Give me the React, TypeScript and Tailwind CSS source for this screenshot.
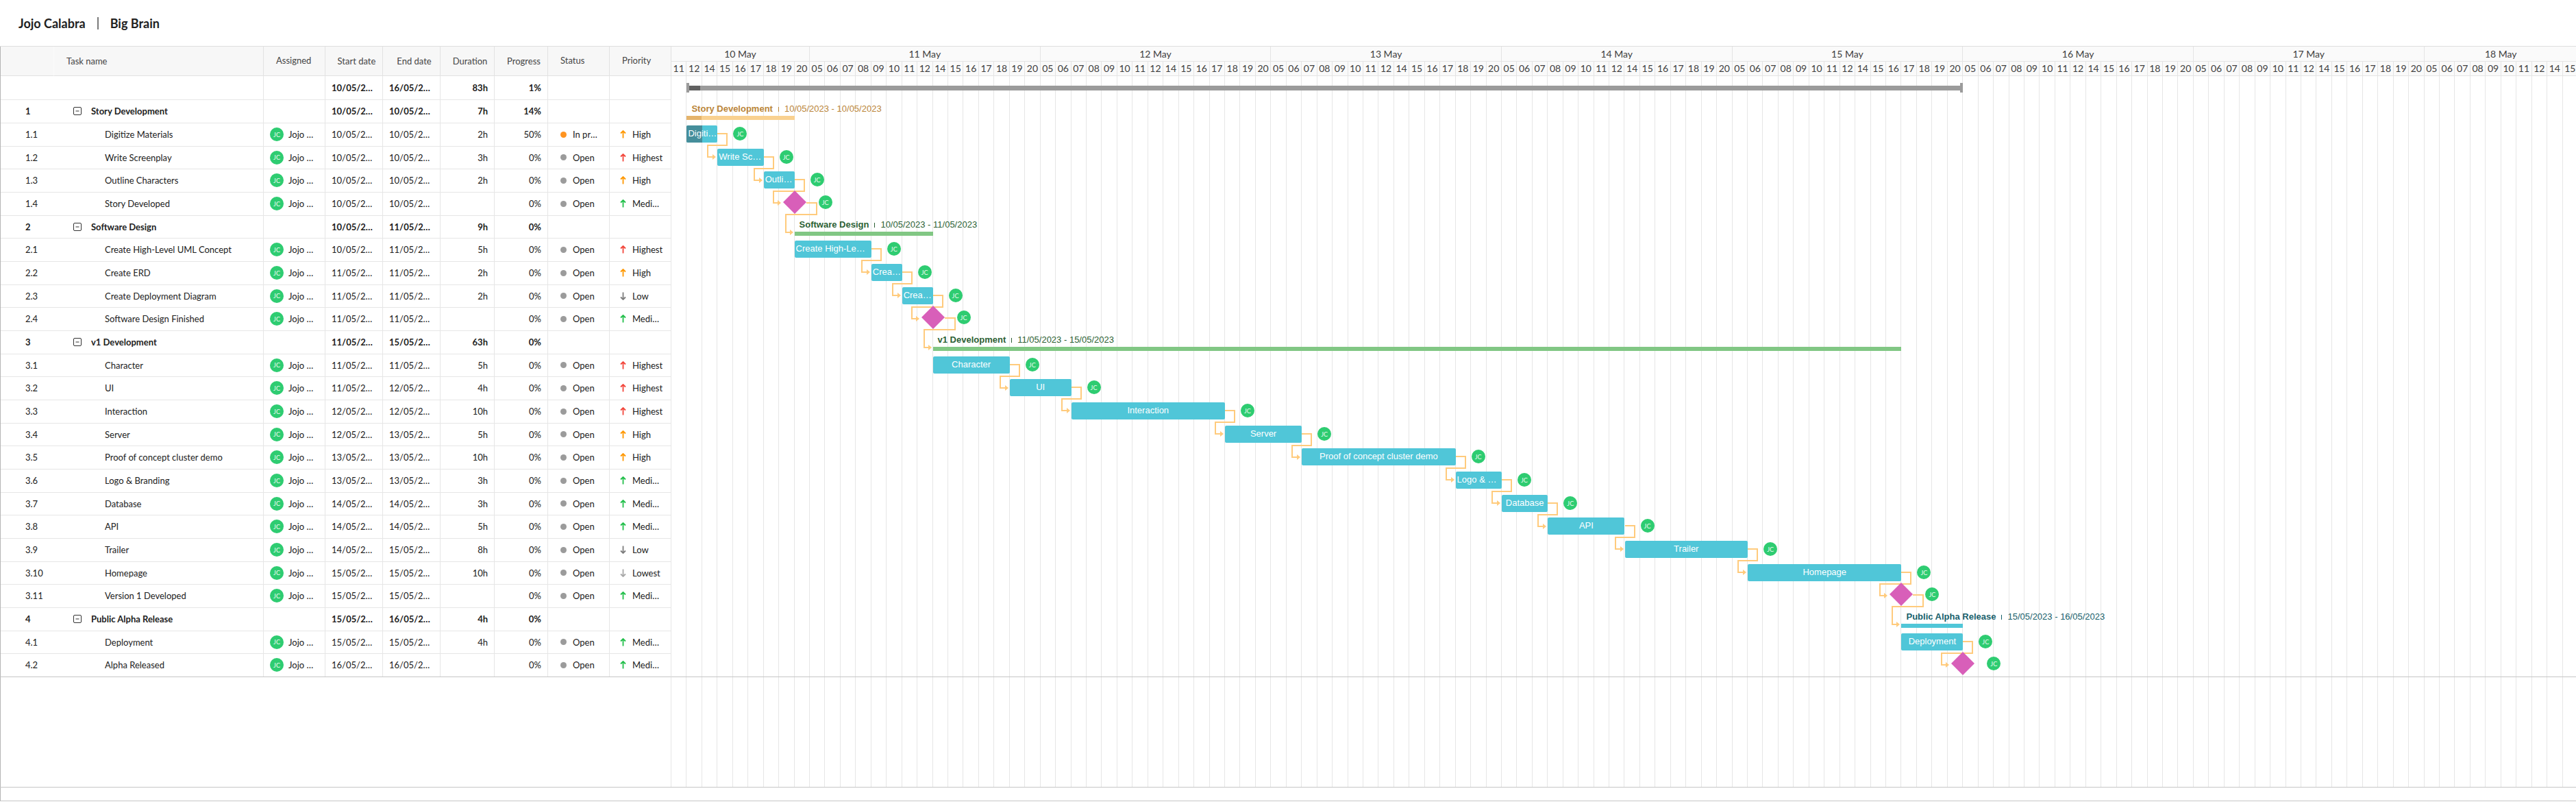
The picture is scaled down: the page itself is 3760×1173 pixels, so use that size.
import React from "react";

type Priority = "Highest" | "High" | "Medium" | "Low" | "Lowest";
type Kind = "project" | "group" | "task" | "milestone";
type Tone = "amber" | "green" | "teal";

interface Row {
  id: string;
  name: string;
  kind: Kind;
  start: string;
  end: string;
  hours: number;
  progress: number;
  from: number;
  status?: "In progress" | "Open";
  priority?: Priority;
  tone?: Tone;
}

const SLOTS = 124;

const task = (id: string, name: string, start: string, end: string, from: number, hours: number, priority: Priority, progress = 0): Row => ({
  id,
  name,
  kind: hours ? "task" : "milestone",
  start: `${start}/05/2023`,
  end: `${end}/05/2023`,
  hours,
  progress,
  from,
  status: progress ? "In progress" : "Open",
  priority,
});

const group = (id: string, name: string, start: string, end: string, from: number, hours: number, tone: Tone, progress = 0): Row => ({
  id,
  name,
  kind: "group",
  start: `${start}/05/2023`,
  end: `${end}/05/2023`,
  hours,
  progress,
  from,
  tone,
});

const rows: Row[] = [
  { id: "", name: "", kind: "project", start: "10/05/2023", end: "16/05/2023", hours: 83, progress: 1, from: 1 },
  group("1", "Story Development", "10", "10", 1, 7, "amber", 14),
  task("1.1", "Digitize Materials", "10", "10", 1, 2, "High", 50),
  task("1.2", "Write Screenplay", "10", "10", 3, 3, "Highest"),
  task("1.3", "Outline Characters", "10", "10", 6, 2, "High"),
  task("1.4", "Story Developed", "10", "10", 8, 0, "Medium"),
  group("2", "Software Design", "10", "11", 8, 9, "green"),
  task("2.1", "Create High-Level UML Concept", "10", "11", 8, 5, "Highest"),
  task("2.2", "Create ERD", "11", "11", 13, 2, "High"),
  task("2.3", "Create Deployment Diagram", "11", "11", 15, 2, "Low"),
  task("2.4", "Software Design Finished", "11", "11", 17, 0, "Medium"),
  group("3", "v1 Development", "11", "15", 17, 63, "green"),
  task("3.1", "Character", "11", "11", 17, 5, "Highest"),
  task("3.2", "UI", "11", "12", 22, 4, "Highest"),
  task("3.3", "Interaction", "12", "12", 26, 10, "Highest"),
  task("3.4", "Server", "12", "13", 36, 5, "High"),
  task("3.5", "Proof of concept cluster demo", "13", "13", 41, 10, "High"),
  task("3.6", "Logo & Branding", "13", "13", 51, 3, "Medium"),
  task("3.7", "Database", "14", "14", 54, 3, "Medium"),
  task("3.8", "API", "14", "14", 57, 5, "Medium"),
  task("3.9", "Trailer", "14", "15", 62, 8, "Low"),
  task("3.10", "Homepage", "15", "15", 70, 10, "Lowest"),
  task("3.11", "Version 1 Developed", "15", "15", 80, 0, "Medium"),
  group("4", "Public Alpha Release", "15", "16", 80, 4, "teal"),
  task("4.1", "Deployment", "15", "15", 80, 4, "Medium"),
  task("4.2", "Alpha Released", "16", "16", 84, 0, "Medium"),
];

/* Short captions for bars that are too narrow for the task's name. */
const captions: Record<string, string> = {
  "1.1": "Digiti…",
  "1.2": "Write Sc…",
  "1.3": "Outli…",
  "2.1": "Create High-Le…",
  "2.2": "Crea…",
  "2.3": "Crea…",
  "3.6": "Logo & …",
};

const fullDay = ["05", "06", "07", "08", "09", "10", "11", "12", "14", "15", "16", "17", "18", "19", "20"];
const days = [
  { label: "10 May", hours: fullDay.slice(6) },
  ...["11", "12", "13", "14", "15", "16", "17"].map((d) => ({ label: `${d} May`, hours: fullDay })),
  { label: "18 May", hours: fullDay.slice(0, 10) },
];

const rowHeight = (i: number) => (i === 0 ? "h-[35px]" : i % 3 === 0 ? "h-[33px]" : "h-[34px]");
const pct = (slots: number) => `${(slots / SLOTS) * 100}%`;

const priorityTone: Record<Priority, string> = {
  Highest: "text-[#f2473c]",
  High: "text-[#ff9800]",
  Medium: "text-[#23bf4b]",
  Low: "text-[#7d7d7d]",
  Lowest: "text-[#a8a8a8]",
};

function PriorityArrow({ level }: { level: Priority }) {
  const down = level === "Low" || level === "Lowest";
  return (
    <svg viewBox="0 0 9 12" className={`h-3 w-[9px] shrink-0 ${priorityTone[level]}`} fill="none" stroke="currentColor" strokeWidth="1.8">
      {down ? <path d="M4.5 0.5V11M1 7.5L4.5 11L8 7.5" /> : <path d="M4.5 11.5V1M1 4.5L4.5 1L8 4.5" />}
    </svg>
  );
}

function Avatar() {
  return (
    <span className="flex size-5 shrink-0 items-center justify-center rounded-full bg-[#2ecc71] text-[9px] leading-none font-normal text-white/90">
      JC
    </span>
  );
}

function CollapseButton({ name }: { name: string }) {
  return (
    <button type="button" aria-label={`Collapse ${name}`} className="size-3 shrink-0 text-[#333]">
      <svg viewBox="0 0 12 12" className="size-3" fill="none" stroke="currentColor">
        <rect x="0.5" y="0.5" width="11" height="11" rx="1.5" />
        <path d="M3.5 6H8.5" />
      </svg>
    </button>
  );
}

const cell = "border-r border-b border-[#e6e6e6] p-0 px-[9px] pb-px";
const headCell = "border-r border-b border-[#e2e2e2] p-0 font-normal text-[#454545]";

function TaskTable() {
  return (
    <table className="w-[980px] shrink-0 table-fixed border-separate border-spacing-0 border-l border-[#b5b5b5] text-[13px] leading-4 text-[#212121]">
      <colgroup>
        <col className="w-[78px]" />
        <col className="w-[306px]" />
        <col className="w-[90px]" />
        <col className="w-[84px]" />
        <col className="w-[84px]" />
        <col className="w-[79px]" />
        <col className="w-[78px]" />
        <col className="w-[90px]" />
        <col className="w-[90px]" />
      </colgroup>
      <thead>
        <tr className="h-[43px] bg-[#f7f7f7]">
          <th scope="col" aria-label="Number" className="border-r border-b border-r-[#fafafa] border-b-[#e2e2e2] p-0" />
          <th scope="col" className={`${headCell} pl-[18px] text-left`}>Task name</th>
          <th scope="col" className={`${headCell} pb-0.5 pl-[18px] text-left`}>Assigned</th>
          <th scope="col" className={`${headCell} pl-2 text-center`}>Start date</th>
          <th scope="col" className={`${headCell} pl-2 text-center`}>End date</th>
          <th scope="col" className={`${headCell} pl-2 text-center`}>Duration</th>
          <th scope="col" className={`${headCell} pl-2 text-center`}>Progress</th>
          <th scope="col" className={`${headCell} pb-0.5 pl-[18px] text-left`}>Status</th>
          <th scope="col" className={`${headCell} pb-0.5 pl-[18px] text-left`}>Priority</th>
        </tr>
      </thead>
      <tbody>
        {rows.map((r, i) => {
          const strong = r.kind === "project" || r.kind === "group";
          return (
            <tr key={i} className={`${rowHeight(i)} ${strong ? "font-bold" : ""}`}>
              <td className="border-b border-[#e6e6e6] p-0 pb-px pl-9">{r.id}</td>
              <td className={cell}>
                <div className={`flex items-center ${strong ? "gap-[14px] pl-[19px]" : "pl-[65px]"}`}>
                  {r.kind === "group" && <CollapseButton name={r.name} />}
                  <span>{r.name}</span>
                </div>
              </td>
              <td className={cell}>
                {r.status && (
                  <div className="flex items-center gap-[7px]">
                    <Avatar />
                    <span className="truncate">Jojo Calabra</span>
                  </div>
                )}
              </td>
              <td className={`${cell} truncate`}>{r.start}</td>
              <td className={`${cell} truncate`}>{r.end}</td>
              <td className={`${cell} text-right`}>{r.hours ? `${r.hours}h` : ""}</td>
              <td className={`${cell} text-right`}>{r.progress}%</td>
              <td className={cell}>
                {r.status && (
                  <div className="flex items-center gap-[9px] pr-1 pl-[9px]">
                    <span className={`size-[9px] shrink-0 rounded-full ${r.status === "Open" ? "bg-[#9b9b9b]" : "bg-[#ff9421]"}`} />
                    <span className="truncate">{r.status}</span>
                  </div>
                )}
              </td>
              <td className={cell}>
                {r.priority && (
                  <div className="flex items-center gap-[9px] pr-0.5 pl-1.5">
                    <PriorityArrow level={r.priority} />
                    <span className="truncate">{r.priority}</span>
                  </div>
                )}
              </td>
            </tr>
          );
        })}
      </tbody>
    </table>
  );
}

/* Finish-to-start link; its origin is the shared finish/start moment. */
function Link({ source, target }: { source: Kind; target: Kind }) {
  const line =
    source === "milestone"
      ? "M57 1H72V18H27V44H33"
      : target === "milestone"
        ? "M40 1H54V18H9V35H15"
        : "M40 1H54V18H26V35H33";
  const tip = source === "milestone" ? "M33 40L38 44L33 48Z" : target === "milestone" ? "M15 31L20 35L15 39Z" : "M33 31L38 35L33 39Z";
  return (
    <svg viewBox="0 0 76 50" className="absolute top-[14px] -left-10 h-[50px] w-[76px]" fill="none">
      <path d={line} stroke="#ffcb7d" strokeWidth="2" />
      <path d={tip} fill="#ffcb7d" />
    </svg>
  );
}

const groupTone: Record<Tone, { bar: string; text: string }> = {
  amber: { bar: "bg-[#f9d190]", text: "text-[#ba8539]" },
  green: { bar: "bg-[#81c784]", text: "text-[#2c5f34]" },
  teal: { bar: "bg-[#50c6d8]", text: "text-[#17606b]" },
};

function ChartItem({ row, next }: { row: Row; next?: Row }) {
  const left = { left: pct(row.from) };
  const span = { left: pct(row.from), width: pct(row.hours) };

  if (row.kind === "project") {
    return (
      <div className="absolute top-[10px] flex h-[14px] items-center" style={span}>
        <span className="h-[14px] w-1 bg-[#9b9b9b]" />
        <span className="h-[7px] w-4 bg-[#616161]" />
        <span className="h-[7px] grow bg-[#9b9b9b]" />
        <span className="h-[14px] w-1 bg-[#9b9b9b]" />
      </div>
    );
  }

  if (row.kind === "group" && row.tone) {
    const tone = groupTone[row.tone];
    return (
      <>
        <div className={`absolute top-[5px] flex items-center gap-2 pl-[7px] text-[13px] leading-4 whitespace-nowrap ${tone.text}`} style={left}>
          <b>{row.name}</b>
          <span className="h-[7px] w-px bg-current" />
          <span>{row.start} - {row.end}</span>
        </div>
        <div className={`absolute top-[23px] h-1.5 ${tone.bar}`} style={span}>
          <div className="h-full bg-[#e5b46c]" style={{ width: `${row.progress}%` }} />
        </div>
      </>
    );
  }

  const linked = next && <Link source={row.kind} target={next.kind} />;

  if (row.kind === "milestone") {
    return (
      <div className="absolute top-0" style={left}>
        {linked}
        <svg viewBox="0 0 34 34" className="absolute -top-[3px] -left-[17px] size-[34px]">
          <path d="M17 0L34 17L17 34L0 17Z" fill="#d85fb9" />
        </svg>
        <div className="absolute top-1 left-[35px] font-[Lato]"><Avatar /></div>
      </div>
    );
  }

  return (
    <>
      <div className="absolute top-0" style={{ left: pct(row.from + row.hours) }}>
        {linked}
        <div className="absolute top-[5px] left-[23px] font-[Lato]"><Avatar /></div>
      </div>
      <div className="absolute top-[3px] h-[25px] overflow-hidden rounded-[2px] bg-[#50c6d8]" style={span}>
        <div className="absolute inset-y-0 left-0 bg-[#458e9b]" style={{ width: `${row.progress}%` }} />
        <div className={`relative text-[13px] leading-[23px] whitespace-nowrap text-white ${captions[row.id] ? "pl-0.5" : "text-center"}`}>
          {captions[row.id] ?? row.name}
        </div>
      </div>
    </>
  );
}

function Chart() {
  const hourLabels = days.flatMap((d) => d.hours);
  return (
    <div className="min-w-0 grow overflow-hidden">
      <div className="-mr-[3px] flex h-full flex-col">
        <div className="grid grid-cols-[repeat(124,minmax(0,1fr))] bg-[#fafafa] text-center text-sm text-[#3f3f3f]">
          {days.map((d) => (
            <div
              key={d.label}
              className="h-[22px] border-r border-b border-[#e4e4e4] leading-[22px]"
              style={{ gridColumn: `span ${d.hours.length}` }}
            >
              {d.label}
            </div>
          ))}
          {hourLabels.map((h, i) => (
            <div key={i} className="h-[21px] border-r border-b border-[#e4e4e4] leading-[19px]">
              {h}
            </div>
          ))}
        </div>
        <div className="relative grow">
          <div className="absolute inset-0 grid grid-cols-[repeat(124,minmax(0,1fr))]">
            {hourLabels.map((_, i) => (
              <div key={i} className="border-r border-[#e6e6e6]" />
            ))}
          </div>
          <div className="relative border-b border-[#c6c6c6] font-['Liberation_Sans',Arial,sans-serif]">
            {rows.map((r, i) => (
              <div key={i} className={`relative ${i === rows.length - 1 ? "h-[33px]" : rowHeight(i)}`}>
                <ChartItem row={r} next={rows[i + 1]} />
              </div>
            ))}
          </div>
        </div>
      </div>
    </div>
  );
}

export default function App() {
  return (
    <main className="flex min-h-screen flex-col bg-white pb-1 font-[Lato,sans-serif] text-[#212121]">
      <header className="flex h-[67px] items-center gap-[17px] pl-[27px] text-lg font-bold">
        <h1>Jojo Calabra</h1>
        <span className="h-[18px] w-0.5 bg-[#7a7a7a]" />
        <h2>Big Brain</h2>
      </header>
      <section className="flex grow border-t border-b border-t-[#dedede] border-b-[#c6c6c6]">
        <div className="flex w-[980px] shrink-0 flex-col">
          <TaskTable />
          <div className="-mt-px grow border-t border-r border-l border-t-[#c6c6c6] border-r-[#e6e6e6] border-l-[#b5b5b5]" />
        </div>
        <Chart />
      </section>
      <footer className="h-5 border-b border-l border-b-[#c6c6c6] border-l-[#b5b5b5]" />
    </main>
  );
}
